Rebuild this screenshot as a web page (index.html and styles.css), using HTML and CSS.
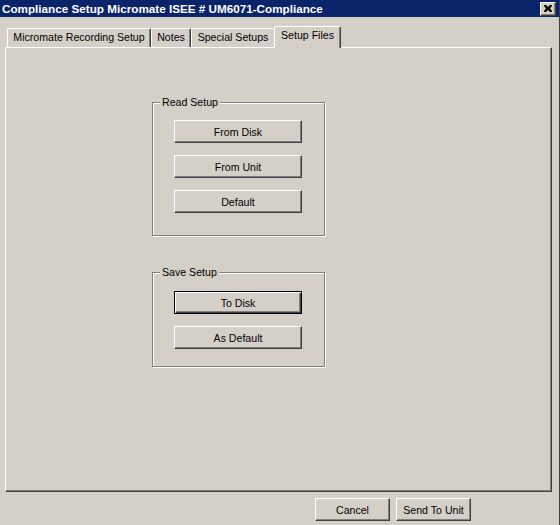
FILE: index.html
```html
<!DOCTYPE html>
<html>
<head>
<meta charset="utf-8">
<link rel="stylesheet" href="styles.css">
</head>
<body>
<div class="window">
  <div class="titlebar">
    <span class="title">Compliance Setup Micromate ISEE # UM6071-Compliance</span>
    <span class="close-btn"><svg width="8" height="7" viewBox="0 0 8 7"><path d="M0 0h2l2 2 2-2h2v1l-2 2.5 2 2.5v1h-2l-2-2-2 2h-2v-1l2-2.5-2-2.5z" fill="#000"/></svg></span>
  </div>
  <div class="tabstrip">
    <div class="tab tab-rec">Micromate Recording Setup</div>
    <div class="tab tab-notes">Notes</div>
    <div class="tab tab-special">Special Setups</div>
    <div class="tab tab-selected">Setup Files</div>
  </div>
  <div class="panel">
    <div class="group group-read">
      <span class="group-label">Read Setup</span>
      <div class="btn wide">From Disk</div>
      <div class="btn wide">From Unit</div>
      <div class="btn wide">Default</div>
    </div>
    <div class="group group-save">
      <span class="group-label">Save Setup</span>
      <div class="btn wide default">To Disk</div>
      <div class="btn wide">As Default</div>
    </div>
  </div>
  <div class="footer">
    <div class="btn small">Cancel</div>
    <div class="btn small">Send To Unit</div>
  </div>
</div>
</body>
</html>
```

FILE: styles.css
```css
html, body {
  margin: 0;
  padding: 0;
}
body {
  width: 560px;
  height: 525px;
  overflow: hidden;
  background: #d4d0c8;
  font-family: "Liberation Sans", Arial, sans-serif;
  font-size: 10.6px;
  color: #000;
}
.window {
  width: 560px;
  height: 525px;
  box-sizing: border-box;
  border-right: 1px solid #404040;
}
.titlebar {
  height: 17px;
  background: #0a246a;
  display: flex;
  align-items: center;
  padding: 0 3px 0 2px;
}
.title {
  color: #fff;
  font-weight: bold;
  font-size: 11.7px;
  white-space: nowrap;
}
.close-btn {
  margin-left: auto;
  width: 16px;
  height: 14px;
  box-sizing: border-box;
  background: #d4d0c8;
  border: 1px solid;
  border-color: #fff #404040 #404040 #fff;
  box-shadow: inset -1px -1px #808080;
  display: flex;
  align-items: center;
  justify-content: center;
}
.tabstrip {
  height: 30px;
  display: flex;
  align-items: flex-end;
  padding-left: 7px;
  position: relative;
  z-index: 1;
}
.tab {
  height: 19px;
  box-sizing: border-box;
  line-height: 17px;
  text-align: center;
  border-top: 1px solid #fff;
  border-left: 1px solid #fff;
  border-right: 1px solid #404040;
  box-shadow: inset -1px 0 #808080;
  border-radius: 2px 2px 0 0;
  white-space: nowrap;
  background: #d4d0c8;
}
.tab-rec {
  width: 144px;
}
.tab-notes {
  width: 40px;
}
.tab-special {
  width: 83px;
  border-right: none;
  box-shadow: none;
}
.tab-selected {
  width: 67px;
  height: 22px;
  line-height: 17px;
  margin-bottom: -1px;
}
.panel {
  margin-left: 5px;
  width: 547px;
  height: 445px;
  box-sizing: border-box;
  border: 1px solid;
  border-color: #fff #404040 #404040 #fff;
  box-shadow: inset -1px -1px #808080;
  padding-top: 54px;
  padding-left: 146px;
}
.group {
  position: relative;
  width: 173px;
  box-sizing: border-box;
  border: 1px solid #808080;
  box-shadow: inset 1px 1px #fff, 1px 1px #fff;
  display: flex;
  flex-direction: column;
  align-items: flex-start;
  gap: 12px;
  padding-left: 21px;
}
.group-read {
  height: 134px;
  padding-top: 17px;
}
.group-save {
  height: 95px;
  margin-top: 36px;
  padding-top: 18px;
}
.group-label {
  position: absolute;
  top: -8px;
  left: 7px;
  padding: 0 2px;
  background: #d4d0c8;
  line-height: 14px;
}
.btn {
  height: 23px;
  box-sizing: border-box;
  border: 1px solid;
  border-color: #fff #404040 #404040 #fff;
  box-shadow: inset -1px -1px #808080;
  background: #d4d0c8;
  display: flex;
  align-items: center;
  justify-content: center;
  white-space: nowrap;
}
.btn.default {
  border-color: #000;
  box-shadow: inset 1px 1px #fff, inset -1px -1px #404040, inset -2px -2px #808080;
}
.wide {
  width: 128px;
}
.small {
  width: 75px;
}
.footer {
  display: flex;
  justify-content: flex-end;
  gap: 6px;
  padding-right: 88px;
  margin-top: 6px;
}
```
